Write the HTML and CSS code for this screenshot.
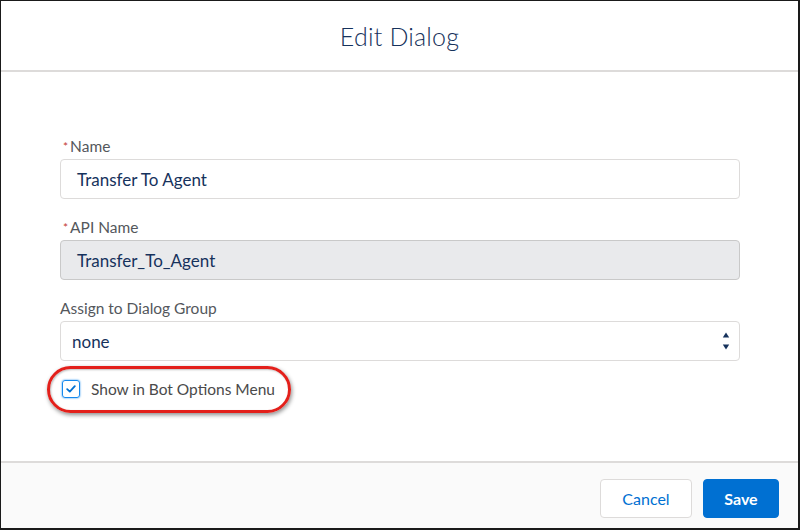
FILE: index.html
```html
<!DOCTYPE html>
<html>
<head>
<meta charset="utf-8">
<link rel="stylesheet" href="styles.css">
</head>
<body>
<div class="frame">
  <header class="head">
    <h2 class="title">Edit Dialog</h2>
  </header>
  <main class="content">
    <div class="field">
      <label class="label"><abbr class="req">*</abbr>Name</label>
      <div class="input">Transfer To Agent</div>
    </div>
    <div class="field">
      <label class="label"><abbr class="req">*</abbr>API Name</label>
      <div class="input disabled">Transfer_To_Agent</div>
    </div>
    <div class="field">
      <label class="label">Assign to Dialog Group</label>
      <div class="input select">
        <span>none</span>
        <svg class="arrows" width="8" height="18" viewBox="0 0 8 18">
          <path d="M0.8 5.5 L4 0.5 L7.2 5.5 Z" fill="#16325c"/>
          <path d="M0.8 12.5 L4 17.5 L7.2 12.5 Z" fill="#16325c"/>
        </svg>
      </div>
    </div>
    <div class="check-row">
      <span class="checkbox">
        <svg width="10" height="8" viewBox="0 0 10 8">
          <path d="M1.2 4.2 L3.8 6.6 L8.8 1.2" fill="none" stroke="#0070d2" stroke-width="1.8" stroke-linecap="round" stroke-linejoin="round"/>
        </svg>
      </span>
      <span class="check-label">Show in Bot Options Menu</span>
    </div>
  </main>
  <footer class="foot">
    <button class="btn neutral">Cancel</button>
    <button class="btn brand">Save</button>
  </footer>
  <div class="highlight"></div>
</div>
</body>
</html>
```

FILE: styles.css
```css
* { box-sizing: border-box; }
html, body { margin: 0; padding: 0; background: #fff; }
body { font-family: Lato, "Noto Sans", sans-serif; }

.frame {
  position: relative;
  width: 800px;
  height: 530px;
  border-style: solid;
  border-color: #1a1a1a;
  border-width: 1px 2px 2px 1px;
  display: flex;
  flex-direction: column;
  background: #fff;
}

.head {
  height: 71px;
  border-bottom: 2px solid #dddbda;
  display: flex;
  align-items: center;
  justify-content: center;
}
.title {
  margin: 0;
  font-weight: 300;
  font-size: 25px;
  color: #16325c;
  letter-spacing: 0.2px;
  padding-top: 1px;
}

.content {
  flex: 1;
  padding: 64px 0 0 59px;
}
.field { width: 680px; margin-bottom: 18px; }
.label {
  display: block;
  height: 20px;
  font-size: 15.5px;
  line-height: 20px;
  color: #54575c;
  margin-bottom: 3px;
  overflow: visible;
}
.req {
  color: #c23934;
  text-decoration: none;
  border: 0;
  font-size: 12px;
  line-height: 1;
  margin: 0 2px 0 3px;
  vertical-align: 1px;
}
.input {
  height: 40px;
  border: 1px solid #dddbda;
  border-radius: 4px;
  background: #fff;
  padding: 0 16px;
  display: flex;
  align-items: center;
  font-size: 17px;
  color: #16325c;
}
.input.disabled {
  background: #e9eaec;
  border-color: #c9c9c9;
}
.input.select {
  padding: 0 9px 0 11px;
  justify-content: space-between;
}

.check-row {
  display: flex;
  align-items: center;
  height: 20px;
  padding-left: 2px;
}
.checkbox {
  width: 18px;
  height: 18px;
  border: 1px solid #1589ee;
  border-radius: 3px;
  box-shadow: 0 0 2px #1589ee;
  display: flex;
  align-items: center;
  justify-content: center;
  margin-right: 11px;
}
.check-label {
  font-size: 15.5px;
  color: #4a4a4a;
}

.foot {
  height: 67px;
  border-top: 2px solid #dddbda;
  background: #fafafa;
  display: flex;
  justify-content: flex-end;
  align-items: flex-start;
  padding: 16px 19px 0 0;
  gap: 11px;
}
.btn {
  height: 39px;
  border-radius: 4px;
  font-family: Lato, "Noto Sans", sans-serif;
  font-size: 16px;
  padding: 0 18px;
  cursor: pointer;
}
.btn.neutral {
  width: 92px;
  background: #fff;
  border: 1px solid #dddbda;
  color: #0070d2;
}
.btn.brand {
  width: 76px;
  background: #0070d2;
  border: 1px solid #0070d2;
  color: #fff;
  font-weight: 700;
}

.highlight {
  position: absolute;
  left: 46px;
  top: 365px;
  width: 244px;
  height: 47px;
  border: 3px solid #e3201b;
  border-radius: 24px;
  box-shadow: 1px 2px 4px rgba(0,0,0,0.45), inset 1px 1px 2px rgba(0,0,0,0.25);
  pointer-events: none;
}
```
